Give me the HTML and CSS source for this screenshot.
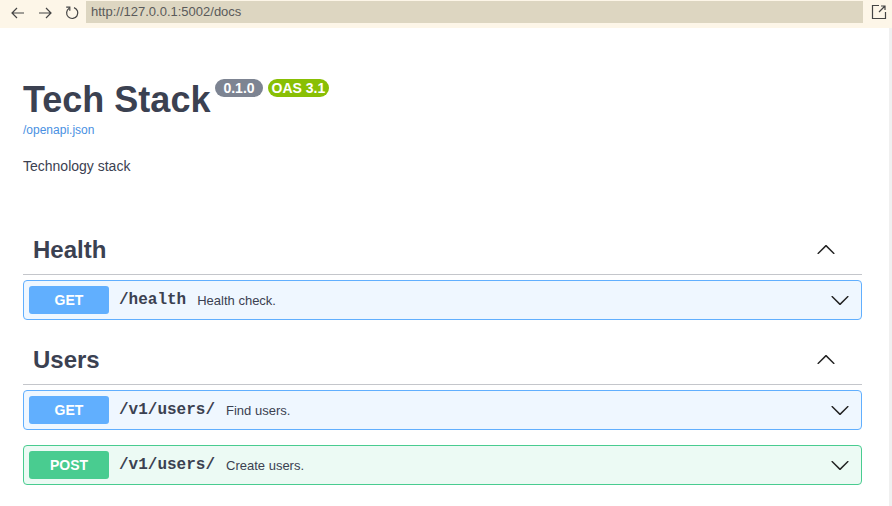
FILE: index.html
```html
<!DOCTYPE html>
<html>
<head>
<meta charset="utf-8">
<link rel="stylesheet" href="styles.css">
</head>
<body>
<div class="topbar">
  <div class="navs">
    <svg class="nav" width="16" height="16" viewBox="0 0 16 16"><path d="M14 8H2M7 3L2 8l5 5" fill="none" stroke="#444" stroke-width="1.2"/></svg>
    <svg class="nav" width="16" height="16" viewBox="0 0 16 16"><path d="M2 8h12M9 3l5 5-5 5" fill="none" stroke="#444" stroke-width="1.2"/></svg>
    <svg class="nav" width="16" height="16" viewBox="0 0 16 16"><path d="M5.2 3.2A5.6 5.6 0 1 0 10 2.6" fill="none" stroke="#444" stroke-width="1.2"/><path d="M2.2 2.2h3.6v3.6" fill="none" stroke="#444" stroke-width="1.2"/></svg>
  </div>
  <div class="url">http://127.0.0.1:5002/docs</div>
  <svg class="ext" width="16" height="16" viewBox="0 0 16 16"><path d="M8 1.5H1.5v13h13V8" fill="none" stroke="#444" stroke-width="1.2"/><path d="M8 8l6-6M10 2h4v4" fill="none" stroke="#444" stroke-width="1.2"/></svg>
</div>
<div class="page">
  <div class="main">
    <div class="info">
      <h1 class="title">Tech Stack <span class="badge ver">0.1.0</span><span class="badge oas">OAS 3.1</span></h1>
      <a class="link" href="#">/openapi.json</a>
      <p class="desc">Technology stack</p>
    </div>

    <div class="tag">
      <div class="tag-head">
        <h3>Health</h3>
        <svg class="chev-up" width="20" height="20" viewBox="0 0 20 20"><path d="M17.418 6.109c.272-.268.709-.268.979 0s.271.701 0 .969l-7.908 7.83c-.27.268-.707.268-.979 0l-7.908-7.830c-.27-.268-.27-.701 0-.969.271-.268.709-.268.979 0L10 13.25l7.418-7.141z"/></svg>
      </div>
      <div class="op get">
        <span class="method">GET</span>
        <span class="path">/health</span>
        <span class="summary">Health check.</span>
        <svg class="chev" width="20" height="20" viewBox="0 0 20 20"><path d="M17.418 6.109c.272-.268.709-.268.979 0s.271.701 0 .969l-7.908 7.83c-.27.268-.707.268-.979 0l-7.908-7.83c-.27-.268-.27-.701 0-.969.271-.268.709-.268.979 0L10 13.25l7.418-7.141z"/></svg>
      </div>
    </div>

    <div class="tag">
      <div class="tag-head">
        <h3>Users</h3>
        <svg class="chev-up" width="20" height="20" viewBox="0 0 20 20"><path d="M17.418 6.109c.272-.268.709-.268.979 0s.271.701 0 .969l-7.908 7.83c-.27.268-.707.268-.979 0l-7.908-7.83c-.27-.268-.27-.701 0-.969.271-.268.709-.268.979 0L10 13.25l7.418-7.141z"/></svg>
      </div>
      <div class="op get">
        <span class="method">GET</span>
        <span class="path">/v1/users/</span>
        <span class="summary">Find users.</span>
        <svg class="chev" width="20" height="20" viewBox="0 0 20 20"><path d="M17.418 6.109c.272-.268.709-.268.979 0s.271.701 0 .969l-7.908 7.83c-.27.268-.707.268-.979 0l-7.908-7.83c-.27-.268-.27-.701 0-.969.271-.268.709-.268.979 0L10 13.25l7.418-7.141z"/></svg>
      </div>
      <div class="op post">
        <span class="method">POST</span>
        <span class="path">/v1/users/</span>
        <span class="summary">Create users.</span>
        <svg class="chev" width="20" height="20" viewBox="0 0 20 20"><path d="M17.418 6.109c.272-.268.709-.268.979 0s.271.701 0 .969l-7.908 7.83c-.27.268-.707.268-.979 0l-7.908-7.83c-.27-.268-.27-.701 0-.969.271-.268.709-.268.979 0L10 13.25l7.418-7.141z"/></svg>
      </div>
    </div>
  </div>
  <div class="scroll"></div>
</div>
</body>
</html>
```
FILE: styles.css
```css
* { box-sizing: border-box; }
html, body { margin: 0; padding: 0; background: #fff; }
body { font-family: "Liberation Sans", Arial, sans-serif; color: #3b4151; width: 892px; height: 506px; overflow: hidden; }

.topbar { height: 28px; background: #fdf6e8; display: flex; align-items: flex-start; }
.navs { display: flex; gap: 11px; padding: 5px 0 0 10px; width: 86px; }
.nav { display: block; }
.url { width: 777px; height: 22px; margin-top: 1px; background: #ddd6c1; color: #5a5a5a; font-size: 13px; line-height: 22px; padding-left: 5px; }
.ext { margin: 4px 0 0 8px; }

.page { display: flex; height: 478px; }
.main { width: 889px; padding: 0 27px 0 23px; }
.scroll { width: 3px; background: #f0f0f0; }

.info { padding-top: 50px; }
.title { margin: 0; font-size: 36px; font-weight: 700; line-height: 43px; color: #3b4151; white-space: nowrap; }
.badge { display: inline-block; vertical-align: top; margin-top: 1px; height: 18px; line-height: 18px; padding: 0 4px; border-radius: 9px; color: #fff; font-size: 14px; font-weight: 700; }
.ver { background: #7d8492; margin-left: -5px; padding: 0 8px; }
.oas { background: #89bf04; margin-left: 5px; }
.link { display: block; font-size: 12px; line-height: 15px; color: #4990e2; text-decoration: none; margin-top: 2px; }
.desc { margin: 20px 0 0; font-size: 14px; line-height: 17px; }

.info + .tag { margin-top: 50px; }
.tag-head { display: flex; align-items: center; justify-content: space-between; height: 50px; border-bottom: 1px solid #c4c6cb; padding: 0 26px 0 10px; margin-bottom: 5px; }
.tag-head h3 { margin: 0; font-size: 24px; line-height: 30px; font-weight: 700; color: #3b4151; }
.chev-up { transform: rotate(180deg); display: block; }
.chev-up path, .chev path { fill: #222; }

.op { display: flex; align-items: center; height: 40px; padding: 0 5px; border: 1px solid; border-radius: 4px; margin-bottom: 15px; }
.op.get { border-color: #61affe; background: #eff7ff; }
.op.post { border-color: #49cc90; background: #ecfaf4; }
.method { width: 80px; height: 28px; line-height: 28px; text-align: center; color: #fff; font-weight: 700; font-size: 14px; border-radius: 3px; }
.get .method { background: #61affe; }
.post .method { background: #49cc90; }
.path { font-family: "Liberation Mono", "Courier New", monospace; font-weight: 700; font-size: 16px; margin-left: 10px; margin-right: 11px; }
.summary { font-size: 13px; flex: 1; }
.chev { display: block; margin-right: 6px; }
```
